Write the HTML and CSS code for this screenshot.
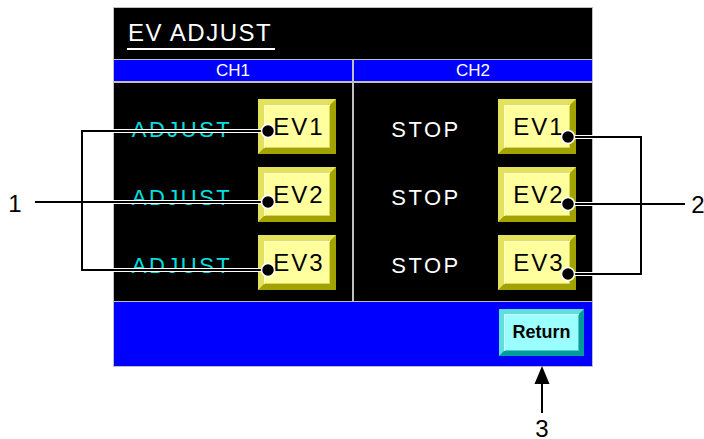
FILE: index.html
```html
<!DOCTYPE html>
<html lang="en">
<head>
  <meta charset="UTF-8" />
  <meta name="viewport" content="width=device-width, initial-scale=1.0"/>
  <title>EV Adjust</title>
  <link rel="stylesheet" href="styles.css">
</head>
<body>
  <div class="figure">
    <div class="screen">
      <div class="title"><span>EV ADJUST</span></div>

      <div class="heads">
        <div class="head">CH1</div>
        <div class="head">CH2</div>
      </div>

      <div class="panels">
        <div class="panel ch1">
          <div class="row"><span class="label adjust">ADJUST</span><button class="ev">EV1</button></div>
          <div class="row"><span class="label adjust">ADJUST</span><button class="ev">EV2</button></div>
          <div class="row"><span class="label adjust">ADJUST</span><button class="ev">EV3</button></div>
        </div>
        <div class="panel ch2">
          <div class="row"><span class="label stop">STOP</span><button class="ev">EV1</button></div>
          <div class="row"><span class="label stop">STOP</span><button class="ev">EV2</button></div>
          <div class="row"><span class="label stop">STOP</span><button class="ev">EV3</button></div>
        </div>
      </div>

      <div class="footer">
        <button class="return">Return</button>
      </div>
    </div>

    <!-- callout lines drawn over the screen -->
    <svg class="callouts" width="704" height="439" viewBox="0 0 704 439">
      <g fill="none" stroke="#fff" stroke-width="4">
        <path d="M268 124 H82 V263 H268"/>
        <path d="M35 195 H268"/>
        <path d="M568 130 H641 V267 H568"/>
        <path d="M568 197 H685"/>
      </g>
      <g fill="none" stroke="#000" stroke-width="2">
        <path d="M268 124 H82 V263 H268"/>
        <path d="M35 195 H268"/>
        <path d="M568 130 H641 V267 H568"/>
        <path d="M568 197 H685"/>
        <path d="M542 406 V372"/>
      </g>
      <g fill="#000" stroke="#fff" stroke-width="1.5">
        <circle cx="268" cy="124" r="6.5"/>
        <circle cx="268" cy="195" r="6.5"/>
        <circle cx="268" cy="263" r="6.5"/>
        <circle cx="568" cy="130" r="6.5"/>
        <circle cx="568" cy="197" r="6.5"/>
        <circle cx="568" cy="267" r="6.5"/>
      </g>
      <path d="M542 359 L549.5 377 H534.5 Z" fill="#000"/>
      <text class="num" x="15" y="205" text-anchor="middle">1</text>
      <text class="num" x="698" y="206" text-anchor="middle">2</text>
      <text class="num" x="542" y="430" text-anchor="middle">3</text>
    </svg>
  </div>
</body>
</html>
```

FILE: styles.css
```css
body {
  margin: 0;
  background: #fff;
  font-family: "Liberation Sans", Arial, sans-serif;
  overflow: hidden;
}
.figure {
  position: relative;
  width: 704px;
  height: 439px;
}
.screen {
  box-sizing: border-box;
  width: 480px;
  height: 360px;
  margin: 7px 0 0 113px;
  padding: 1px;
  background: #c0c0c0;
  display: flex;
  flex-direction: column;
}
.title {
  height: 51px;
  box-sizing: border-box;
  background: #000;
  padding: 13px 0 0 13px;
}
.title span {
  display: inline-block;
  color: #fff;
  font-size: 24px;
  line-height: 24px;
  letter-spacing: 1.5px;
  padding: 0 3px 3px 1px;
  border-bottom: 2px solid #fff;
}
.heads {
  margin-top: 1px;
  height: 21px;
  display: grid;
  grid-template-columns: 1fr 1fr;
  column-gap: 2px;
}
.head {
  background: #0000ff;
  color: #fff;
  font-size: 17px;
  line-height: 21px;
  text-align: center;
}
.panels {
  margin-top: 2px;
  height: 218px;
  display: grid;
  grid-template-columns: 1fr 1fr;
  column-gap: 2px;
}
.panel {
  background: #000;
  padding-top: 16px;
  display: flex;
  flex-direction: column;
  gap: 13px;
}
.row {
  display: flex;
  align-items: center;
  height: 55px;
}
.label {
  box-sizing: border-box;
  width: 144px;
  padding-top: 6px;
  text-align: center;
  font-size: 22px;
  letter-spacing: 2.5px;
}
.adjust {
  color: #00e0e0;
  padding-right: 8px;
}
.stop {
  color: #fff;
}
.ev {
  box-sizing: border-box;
  width: 78px;
  height: 55px;
  margin: 0;
  padding: 0 0 0 4px;
  border: 6px solid;
  border-color: #e2e25c #a3a300 #a3a300 #e2e25c;
  background: #ffff9e;
  box-shadow: inset 1px 1px 0 #ffffd0, inset -1px -1px 0 #d8d860;
  font-family: "Liberation Sans", Arial, sans-serif;
  font-size: 24px;
  letter-spacing: 2px;
  color: #000;
}
.footer {
  margin-top: 1px;
  height: 64px;
  box-sizing: border-box;
  background: #0000ff;
  padding: 7px 8px;
  display: flex;
  justify-content: flex-end;
  align-items: flex-start;
}
.return {
  box-sizing: border-box;
  width: 85px;
  height: 47px;
  margin: 0;
  padding: 0;
  border: 5px solid;
  border-color: #5fdede #009c9c #009c9c #5fdede;
  background: #9cffff;
  box-shadow: inset 1px 1px 0 #d0ffff, inset -1px -1px 0 #50c8c8;
  font-family: "Liberation Sans", Arial, sans-serif;
  font-weight: bold;
  font-size: 18px;
  color: #000;
}
.callouts {
  position: absolute;
  left: 0;
  top: 0;
  pointer-events: none;
}
.num {
  font-family: "Liberation Sans", Arial, sans-serif;
  font-size: 24px;
  fill: #000;
}
```
